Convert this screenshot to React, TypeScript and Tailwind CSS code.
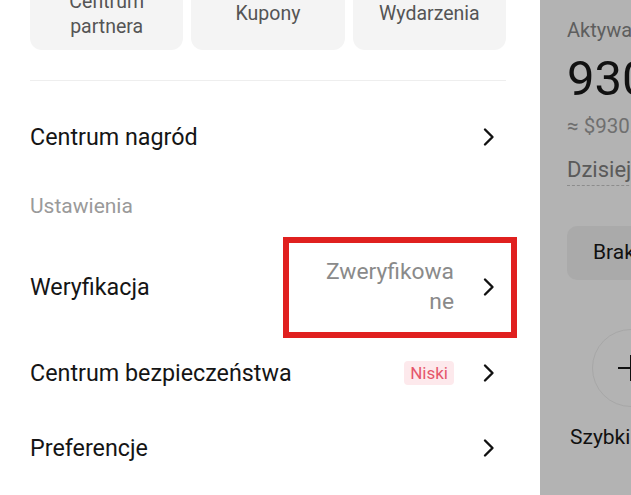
import React from "react";

function Chevron() {
  return (
    <svg width="14" height="20" viewBox="0 0 14 20" fill="none" className="mr-[10px] shrink-0">
      <path d="M3 2.5 L10.5 10 L3 17.5" stroke="#111" strokeWidth="2.4" strokeLinecap="round" strokeLinejoin="round" />
    </svg>
  );
}

function Row({ label, height, children }: { label: string; height: string; children?: React.ReactNode }) {
  return (
    <div className={`flex items-center justify-between ${height}`}>
      <span className="text-[23.3px] text-[#151515]">{label}</span>
      <div className="flex items-center gap-[28px]">
        {children}
        <Chevron />
      </div>
    </div>
  );
}

export default function App() {
  return (
    <div
      className="relative flex h-[495px] w-[631px] overflow-hidden bg-white"
      style={{ fontFamily: "Roboto, 'Noto Sans', sans-serif" }}
    >
      {/* drawer */}
      <div className="w-[540px] shrink-0 bg-white pl-[30px] pr-[34px]">
        <div className="-mt-[22px] grid grid-cols-3 gap-[8px]">
          <div className="flex h-[72px] flex-col items-center justify-center rounded-[12px] bg-[#f4f4f4] text-[19.5px] leading-[25px] text-[#555]">
            <span>Centrum</span>
            <span>partnera</span>
          </div>
          <div className="flex h-[72px] items-center justify-center rounded-[12px] bg-[#f4f4f4] text-[19.5px] text-[#555]">
            Kupony
          </div>
          <div className="flex h-[72px] items-center justify-center rounded-[12px] bg-[#f4f4f4] text-[19.5px] text-[#555]">
            Wydarzenia
          </div>
        </div>

        <div className="mt-[30px] h-px bg-[#eeeeee]" />

        <div className="mt-[19px]">
          <Row label="Centrum nagród" height="h-[74px]" />
          <div className="flex h-[66px] items-center text-[21px] text-[#9a9a9a]">Ustawienia</div>
          <Row label="Weryfikacja" height="h-[94px]">
            <div className="flex flex-col items-end text-[22.8px] leading-[30px] text-[#8a8a8a]">
              <span>Zweryfikowa</span>
              <span>ne</span>
            </div>
          </Row>
          <Row label="Centrum bezpieczeństwa" height="h-[78px]">
            <span className="rounded-[4px] bg-[#fde9ec] px-[6px] text-[17px] leading-[24px] text-[#e5566b]">
              Niski
            </span>
          </Row>
          <Row label="Preferencje" height="h-[72px]" />
        </div>
      </div>

      {/* dimmed page behind */}
      <div className="flex-1 overflow-hidden bg-[#b3b3b3] pl-[27px]">
        <div className="w-[300px]">
          <div className="mt-[19px] text-[20px] leading-[22px] text-[#5e5e5e]">Aktywa łącznie</div>
          <div className="mt-[13px] text-[49px] leading-[50px] text-[#111]">930.00</div>
          <div className="mt-[11px] text-[20.5px] leading-[22px] text-[#6f6f6f]">≈ $930.00</div>
          <div className="mt-[22px] inline-block border-b border-dashed border-[#8c8c8c] pb-[4px] text-[22px] leading-[22px] text-[#5a5a5a]">
            Dzisiejszy zysk
          </div>
          <div className="mt-[40px] flex h-[54px] w-[200px] items-center rounded-[10px] bg-[#aaaaaa] pl-[26px] text-[21px] text-[#111]">
            Brak aktywów
          </div>
          <div className="mt-[49px] ml-[25px] flex h-[78px] w-[78px] items-center justify-center rounded-full border border-[#a7a7a7]">
            <svg width="30" height="30" viewBox="0 0 30 30">
              <path d="M15 2 V28 M2 15 H28" stroke="#111" strokeWidth="2" />
            </svg>
          </div>
          <div className="mt-[15px] ml-[3px] text-[21px] text-[#111]">Szybki zakup</div>
        </div>
      </div>

      {/* annotation box */}
      <div className="pointer-events-none absolute left-[283px] top-[237px] h-[101px] w-[234px] border-[6px] border-[#e0201f]" />
    </div>
  );
}
